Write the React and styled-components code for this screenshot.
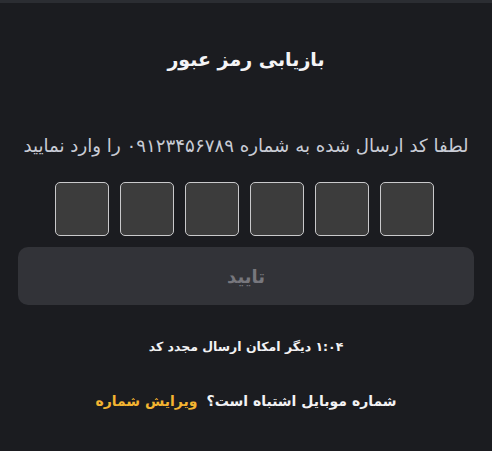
import { useState } from "react";
import styled, { createGlobalStyle } from "styled-components";

const Global = createGlobalStyle`
  html, body {
    margin: 0;
    padding: 0;
    background: #1b1c20;
  }
  body {
    font-family: "DejaVu Sans", "Noto Sans", sans-serif;
  }
`;

const Page = styled.div`
  min-height: 451px;
  background: #1b1c20;
  border-top: 3px solid #2b2d32;
  box-sizing: border-box;
  direction: rtl;
  display: flex;
  flex-direction: column;
  align-items: center;
  padding: 0 18px;
  color: #f2f2f4;
`;

const Title = styled.h1`
  margin: 42px 0 0;
  font-size: 19px;
  font-weight: 700;
  line-height: 28px;
  color: #f4f4f6;
`;

const Hint = styled.p`
  margin: 58px 0 0;
  font-size: 18.2px;
  line-height: 30px;
  color: #c9ccd6;
  white-space: nowrap;
`;

const Digits = styled.div`
  direction: ltr;
  display: flex;
  gap: 11px;
  margin-top: 21px;
  margin-right: 3px;
`;

const Digit = styled.input`
  width: 54px;
  height: 54px;
  box-sizing: border-box;
  border: 1px solid #c9c9cb;
  border-radius: 5px;
  background: #3c3c3c;
  color: #fff;
  text-align: center;
  font-size: 20px;
  font-family: inherit;
  outline: none;
`;

const Submit = styled.button`
  width: 100%;
  height: 58px;
  margin-top: 11px;
  border: none;
  border-radius: 10px;
  background: #323338;
  color: #77777d;
  font-family: inherit;
  font-size: 18px;
  font-weight: 700;
`;

const Timer = styled.div`
  margin-top: 32px;
  font-size: 12.5px;
  font-weight: 600;
  line-height: 20px;
  color: #f2f2f4;
`;

const Footer = styled.div`
  margin-top: 33px;
  font-size: 14px;
  font-weight: 600;
  line-height: 22px;
  display: flex;
  gap: 9px;
`;

const EditLink = styled.a`
  color: #f3b431;
  text-decoration: none;
  cursor: pointer;
`;

export default function App() {
  const [code, setCode] = useState(["", "", "", "", "", ""]);

  const change = (i, v) => {
    const next = [...code];
    next[i] = v.slice(-1);
    setCode(next);
  };

  return (
    <>
      <Global />
      <Page>
        <Title>بازیابی رمز عبور</Title>
        <Hint>لطفا کد ارسال شده به شماره ۰۹۱۲۳۴۵۶۷۸۹ را وارد نمایید</Hint>
        <Digits>
          {code.map((d, i) => (
            <Digit key={i} value={d} maxLength={1} onChange={(e) => change(i, e.target.value)} />
          ))}
        </Digits>
        <Submit disabled>تایید</Submit>
        <Timer>۱:۰۴ دیگر امکان ارسال مجدد کد</Timer>
        <Footer>
          <span>شماره موبایل اشتباه است؟</span>
          <EditLink>ویرایش شماره</EditLink>
        </Footer>
      </Page>
    </>
  );
}
